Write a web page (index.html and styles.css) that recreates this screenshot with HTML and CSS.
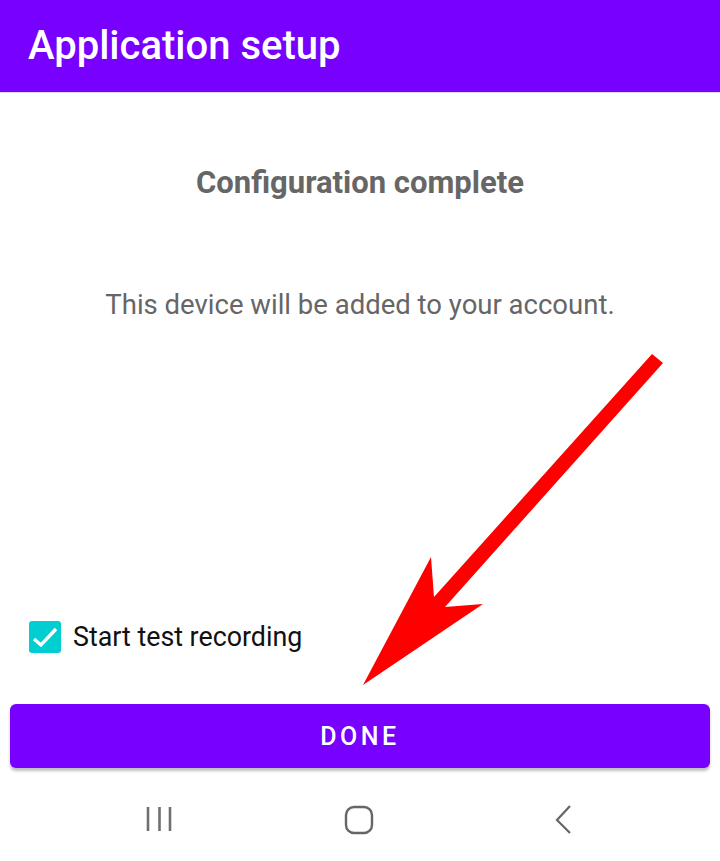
FILE: index.html
```html
<!DOCTYPE html>
<html lang="en">
<head>
    <meta charset="UTF-8">
    <meta name="viewport" content="width=device-width, initial-scale=1.0">
    <title>Application setup</title>
    <link rel="stylesheet" href="styles.css">
</head>
<body>
    <header class="app-bar">
        <h1>Application setup</h1>
    </header>

    <main class="content">
        <h2 class="status-title">Configuration complete</h2>
        <p class="status-text">This device will be added to your account.</p>

        <div class="spacer"></div>

        <label class="check-row">
            <span class="check-box">
                <svg width="32" height="32" viewBox="0 0 32 32">
                    <path d="M5 18 L12 24 L27 8" fill="none" stroke="#fff" stroke-width="3.4"/>
                </svg>
            </span>
            <span class="check-label">Start test recording</span>
        </label>

        <button class="done-btn">DONE</button>
    </main>

    <!-- Android navigation bar -->
    <nav class="nav-bar">
        <svg class="nav-icon" width="30" height="30" viewBox="0 0 30 30">
            <path d="M2 2 V26 M13.5 2 V26 M24 2 V26" stroke="#707070" stroke-width="2.6" fill="none"/>
        </svg>
        <svg class="nav-icon" width="30" height="30" viewBox="0 0 30 30">
            <rect x="2" y="2" width="26" height="26" rx="8" stroke="#666" stroke-width="2.4" fill="none"/>
        </svg>
        <svg class="nav-icon" width="30" height="30" viewBox="0 0 30 30">
            <path d="M28 1 L15 15 L28 28" stroke="#666" stroke-width="2.2" fill="none"/>
        </svg>
    </nav>

    <!-- annotation arrow drawn over the screenshot -->
    <svg class="arrow" width="720" height="861" viewBox="0 0 720 861">
        <polygon points="363,685 431,557 434,597 652,354 663,363 445,607 483,604" fill="#ff0000"/>
    </svg>
</body>
</html>
```

FILE: styles.css
```css
html, body {
    margin: 0;
    padding: 0;
    height: 861px;
    font-family: Roboto, "Noto Sans", sans-serif;
    background-color: #fff;
}

body {
    position: relative;
    display: flex;
    flex-direction: column;
    overflow: hidden;
}

/* Header */
.app-bar {
    background-color: #7800ff;
    height: 92px;
    border-bottom: 1px solid #e4d8f4;
    display: flex;
    align-items: center;
    padding: 0 28px;
}

.app-bar h1 {
    margin: 0;
    color: #fff;
    font-size: 40px;
    font-weight: 500;
    padding-bottom: 2px;
}

.content {
    flex: 1;
    display: flex;
    flex-direction: column;
    padding: 0 10px;
}

.status-title {
    margin: 66px 0 0;
    text-align: center;
    color: #666;
    font-size: 31px;
    font-weight: 700;
    line-height: 48px;
}

.status-text {
    margin: 80px 0 0;
    text-align: center;
    color: #666;
    font-size: 27.5px;
    line-height: 36px;
}

.spacer {
    flex: 1;
}

.check-row {
    display: flex;
    align-items: center;
    gap: 12px;
    padding-left: 19px;
}

.check-box {
    width: 32px;
    height: 32px;
    border-radius: 3px;
    background-color: #00ced1;
    display: flex;
}

.check-label {
    font-size: 26.8px;
    color: #111;
}

.done-btn {
    margin: 51px 0 13px;
    height: 64px;
    border: none;
    border-radius: 6px;
    background-color: #7800ff;
    color: #fff;
    font-family: Roboto, sans-serif;
    font-size: 25px;
    font-weight: 500;
    letter-spacing: 3.5px;
    padding-left: 6px;
    box-shadow: 0 3px 3px rgba(0, 0, 0, 0.25);
}

/* Navigation bar */
.nav-bar {
    height: 80px;
    display: flex;
    justify-content: space-between;
    align-items: flex-start;
    padding: 24px 148px 0 146px;
    box-sizing: border-box;
}

.nav-icon {
    display: block;
}

.arrow {
    position: absolute;
    left: 0;
    top: 0;
    pointer-events: none;
}
```
